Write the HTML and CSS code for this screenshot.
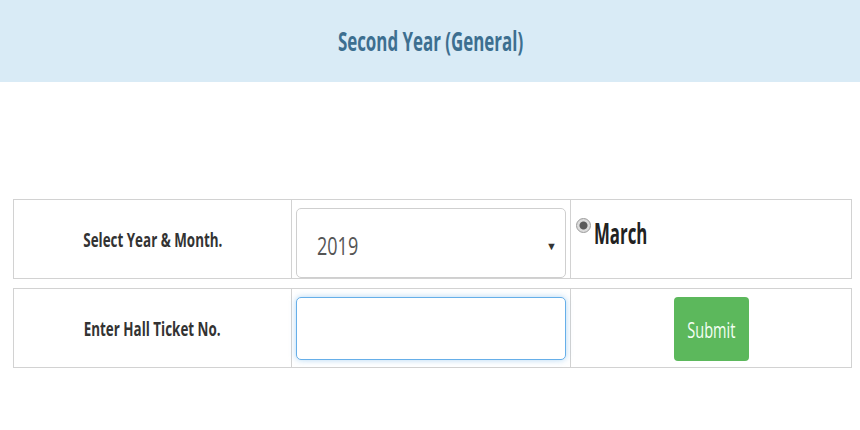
FILE: index.html
```html
<!DOCTYPE html>
<html lang="en">
<head>
  <meta charset="UTF-8" />
  <meta name="viewport" content="width=device-width, initial-scale=1.0"/>
  <title>Second Year (General)</title>
  <link rel="stylesheet" href="styles.css">
</head>
<body>
  <div class="page-head">
    <h2><span class="narrow">Second Year (General)</span></h2>
  </div>

  <div class="result-form">
    <div class="form-row">
      <div class="cell label-cell"><span class="narrow">Select Year &amp; Month.</span></div>
      <div class="cell field-cell">
        <div class="select-box">
          <span class="narrow">2019</span>
          <span class="arrow">&#9660;</span>
        </div>
      </div>
      <div class="cell month-cell">
        <label class="month">
          <input type="radio" name="month" checked />
          <span class="narrow">March</span>
        </label>
      </div>
    </div>

    <div class="form-row">
      <div class="cell label-cell"><span class="narrow">Enter Hall Ticket No.</span></div>
      <div class="cell field-cell">
        <input type="text" class="ticket" id="ticket" />
      </div>
      <div class="cell btn-cell">
        <button class="btn-submit"><span class="narrow">Submit</span></button>
      </div>
    </div>
  </div>
</body>
</html>
```

FILE: styles.css
```css
body {
  margin: 0;
  font-family: "Open Sans", "Liberation Sans", sans-serif;
  background: #fff;
  color: #333;
}
.narrow {
  display: inline-block;
  transform: scaleX(0.72);
}
.page-head {
  background: #d9ebf6;
  height: 82px;
  display: flex;
  align-items: center;
  justify-content: center;
}
.page-head h2 {
  margin: 0;
  font-size: 26px;
  font-weight: 700;
  color: #3d6f90;
}
.page-head .narrow {
  transform: scaleX(0.65);
}
.result-form {
  margin: 117px 8px 0 13px;
  display: flex;
  flex-direction: column;
  gap: 9px;
}
.form-row {
  display: grid;
  grid-template-columns: 279px 279px 1fr;
  height: 80px;
}
.cell {
  border: 1px solid #d2d2d2;
  border-left: none;
  box-sizing: border-box;
}
.cell:first-child {
  border-left: 1px solid #d2d2d2;
}
.label-cell {
  display: flex;
  align-items: center;
  justify-content: center;
  font-size: 20px;
  font-weight: 700;
  color: #333;
}
.label-cell .narrow {
  transform: scaleX(0.67);
}
.field-cell {
  padding: 8px 4px 0 4px;
}
.select-box {
  height: 70px;
  box-sizing: border-box;
  border: 1px solid #cfcfcf;
  border-radius: 5px;
  display: flex;
  align-items: center;
  justify-content: space-between;
  padding: 4px 8px 0 20px;
  font-size: 25px;
  color: #555;
}
.select-box .narrow {
  transform-origin: left center;
}
.arrow {
  font-size: 11px;
  color: #333;
}
.ticket {
  width: 100%;
  height: 63px;
  box-sizing: border-box;
  border: 1px solid #66afe9;
  border-radius: 5px;
  box-shadow: 0 0 6px rgba(102, 175, 233, 0.5);
  outline: none;
  font-size: 18px;
  padding: 6px 12px;
}
.month-cell {
  padding: 17px 5px 0 5px;
}
.month {
  display: flex;
  align-items: flex-start;
  font-size: 29px;
  font-weight: 700;
  color: #222;
  line-height: 32px;
}
.month .narrow {
  transform-origin: left center;
  transform: scaleX(0.58);
  margin-left: 3px;
}
.month input {
  appearance: none;
  flex: none;
  width: 15px;
  height: 15px;
  margin: 1px 0 0 0;
  border-radius: 50%;
  border: 1px solid #9a9a9a;
  background: radial-gradient(circle, #5a5a5a 0 3.5px, #dcdcdc 4.5px);
}
.btn-cell {
  display: flex;
  justify-content: center;
  align-items: center;
  padding-top: 1px;
}
.btn-submit {
  width: 75px;
  height: 64px;
  border: none;
  border-radius: 4px;
  background-color: #5cb85c;
  color: #f4fff4;
  font-family: "Open Sans", "Liberation Sans", sans-serif;
  font-size: 22px;
  padding: 0;
}
.btn-submit .narrow {
  transform: scaleX(0.66);
}
```
